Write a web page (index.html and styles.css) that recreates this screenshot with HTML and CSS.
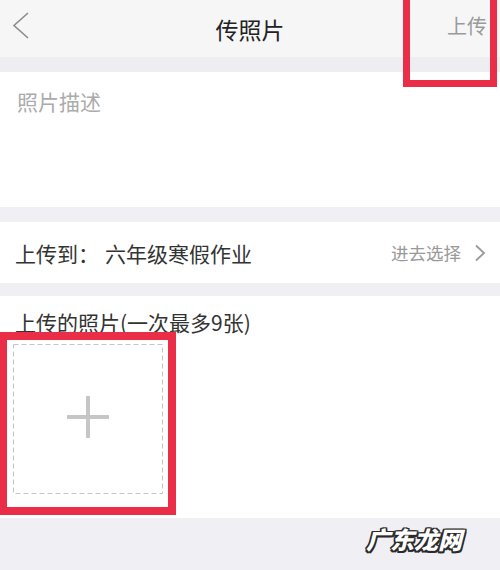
FILE: index.html
```html
<!DOCTYPE html>
<html lang="zh-CN">
<head>
    <meta charset="utf-8" />
    <title>传照片</title>
    <link rel="stylesheet" href="styles.css">
</head>
<body>
<div class="page">
    <div class="header">
        <svg class="back" width="20" height="30" viewBox="0 0 20 30">
            <polyline points="16,1 2,13.5 16,26" fill="none" stroke="#8c8c8c" stroke-width="1.6"/>
        </svg>
        <h1 class="title">传照片</h1>
        <span class="upload">上传</span>
        <div class="mark mark-top"></div>
    </div>

    <div class="gap gap-head"></div>

    <div class="section desc">
        <p class="placeholder">照片描述</p>
    </div>

    <div class="gap"></div>

    <div class="section row">
        <span class="label">上传到：</span>
        <span class="album">六年级寒假作业</span>
        <span class="pick">进去选择</span>
        <svg class="arrow" width="12" height="18" viewBox="0 0 12 18">
            <polyline points="2,1.5 10,9 2,16.5" fill="none" stroke="#9a9a9a" stroke-width="1.8"/>
        </svg>
    </div>

    <div class="gap gap-small"></div>

    <div class="section photos">
        <p class="photos-title">上传的照片(一次最多9张)</p>
        <div class="tile">
            <svg class="tile-border" width="150" height="150" viewBox="0 0 150 150">
                <rect x="0.5" y="0.5" width="149" height="149" fill="none" stroke="#c4c4c4" stroke-width="1" stroke-dasharray="5 3"/>
            </svg>
            <span class="plus-h"></span>
            <span class="plus-v"></span>
            <div class="mark mark-tile"></div>
        </div>
    </div>

    <div class="footer">
        <span class="watermark">广东龙网</span>
    </div>
</div>
</body>
</html>
```

FILE: styles.css
```css
body {
    margin: 0;
    background: #efeff4;
    font-family: "Noto Sans CJK SC", "Noto Sans", sans-serif;
    overflow: hidden;
}
.page {
    width: 500px;
    height: 570px;
    position: relative;
    overflow: hidden;
}
.header {
    position: relative;
    height: 57px;
    background: #f6f6f7;
    display: flex;
    align-items: center;
    justify-content: center;
}
.back {
    position: absolute;
    left: 12px;
    top: 12px;
}
.title {
    margin: 0;
    font-size: 23px;
    font-weight: normal;
    color: #222;
    line-height: 1;
    padding-top: 1px;
}
.upload {
    position: absolute;
    left: 447px;
    top: 14px;
    font-size: 20px;
    line-height: 24px;
    color: #9a9a9a;
}
.mark {
    position: absolute;
    box-sizing: border-box;
    border: 8px solid #ea2e48;
}
.mark-top {
    left: 403px;
    top: -8px;
    width: 94px;
    height: 95px;
    border-width: 7px;
}
.gap {
    height: 15px;
    background: #efeff4;
}
.gap-head {
    background: #eeeef2;
}
.gap-small {
    height: 13px;
}
.section {
    background: #fff;
}
.desc {
    height: 135px;
    padding: 0 17px;
    box-sizing: border-box;
}
.placeholder {
    margin: 0;
    padding-top: 17px;
    font-size: 21px;
    line-height: 24px;
    color: #ababab;
}
.row {
    height: 61px;
    display: flex;
    align-items: center;
    padding: 0 14px 0 15px;
    font-size: 21px;
    color: #333;
}
.label {
    width: 90px;
}
.album {
    flex: 1;
}
.pick {
    font-size: 17.5px;
    color: #999;
    margin-right: 13px;
}
.photos {
    height: 222px;
    padding: 14px 13px 0;
    box-sizing: border-box;
}
.photos-title {
    margin: 0 0 0 2px;
    font-size: 21px;
    line-height: 24px;
    color: #333;
}
.tile {
    position: relative;
    margin-top: 10px;
    width: 150px;
    height: 150px;
}
.tile-border {
    position: absolute;
    left: 0;
    top: 0;
}
.plus-h, .plus-v {
    position: absolute;
    background: #c6c6c6;
}
.plus-h {
    left: 54px;
    top: 71px;
    width: 42px;
    height: 4px;
}
.plus-v {
    left: 73px;
    top: 52px;
    width: 4px;
    height: 42px;
}
.mark-tile {
    left: -14px;
    top: -12px;
    right: -13px;
    bottom: -21px;
}
.footer {
    position: relative;
    height: 52px;
    background: #efeff4;
}
.watermark {
    position: absolute;
    left: 366px;
    top: 7px;
    font-size: 24px;
    line-height: 28px;
    font-weight: 900;
    font-style: italic;
    color: #fff;
    text-shadow: 1.5px 0 #2a2a2a, -1.5px 0 #2a2a2a, 0 1.5px #2a2a2a, 0 -1.5px #2a2a2a,
        1.5px 1.5px #2a2a2a, -1.5px -1.5px #2a2a2a, 1.5px -1.5px #2a2a2a, -1.5px 1.5px #2a2a2a;
}
```
